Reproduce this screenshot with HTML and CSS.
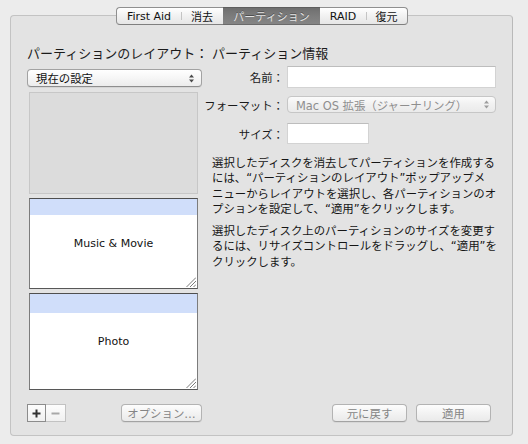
FILE: index.html
```html
<!DOCTYPE html>
<html lang="ja">
<head>
<meta charset="utf-8">
<title>ディスクユーティリティ</title>
<link rel="stylesheet" href="styles.css">
</head>
<body>
<div class="window">
  <div class="tabs">
    <div class="tab tab-firstaid">First Aid</div>
    <div class="tab tab-erase sep">消去</div>
    <div class="tab tab-partition selected">パーティション</div>
    <div class="tab tab-raid">RAID</div>
    <div class="tab tab-restore sep">復元</div>
  </div>
  <div class="panel">
    <div class="layout">
      <div class="col-left">
        <div class="heading">パーティションのレイアウト：</div>
        <div class="popup popup-layout">
          <span class="popup-text">現在の設定</span>
          <svg class="arrows" width="5" height="9" viewBox="0 0 5 9"><polygon points="0,3.6 2.5,0.4 5,3.6"/><polygon points="0,5.4 2.5,8.6 5,5.4"/></svg>
        </div>
        <div class="free-box"></div>
        <div class="part part-music">
          <div class="band"></div>
          <div class="part-name">Music &amp; Movie</div>
          <svg class="grip" width="10" height="10" viewBox="0 0 10 10"><path d="M0.5 10 L10 0.5 M4 10 L10 4 M7.5 10 L10 7.5"/></svg>
        </div>
        <div class="part part-photo">
          <div class="band"></div>
          <div class="part-name">Photo</div>
          <svg class="grip" width="10" height="10" viewBox="0 0 10 10"><path d="M0.5 10 L10 0.5 M4 10 L10 4 M7.5 10 L10 7.5"/></svg>
        </div>
      </div>
      <div class="col-right">
        <div class="heading">パーティション情報</div>
        <div class="field-row row-name">
          <label class="label"><span>名前：</span></label>
          <div class="input input-name"></div>
        </div>
        <div class="field-row row-format">
          <label class="label"><span>フォーマット：</span></label>
          <div class="popup popup-format">
            <span class="popup-text">Mac OS 拡張（ジャーナリング）</span>
            <svg class="arrows" width="5" height="9" viewBox="0 0 5 9"><polygon points="0,3.6 2.5,0.4 5,3.6"/><polygon points="0,5.4 2.5,8.6 5,5.4"/></svg>
          </div>
        </div>
        <div class="field-row row-size">
          <label class="label"><span>サイズ：</span></label>
          <div class="input input-size"></div>
        </div>
        <p class="desc">選択したディスクを消去してパーティションを作成する<br>には、“パーティションのレイアウト”ポップアップメ<br>ニューからレイアウトを選択し、各パーティションのオ<br>プションを設定して、“適用”をクリックします。</p>
        <p class="desc desc-second">選択したディスク上のパーティションのサイズを変更す<br>るには、リサイズコントロールをドラッグし、“適用”を<br>クリックします。</p>
      </div>
    </div>
    <div class="bottom">
      <div class="bottom-left">
        <div class="plusminus">
          <div class="pm pm-plus"><svg width="9" height="9" viewBox="0 0 9 9"><path d="M4.5 0.5 V8.5 M0.5 4.5 H8.5"/></svg></div>
          <div class="pm pm-minus"><svg width="9" height="9" viewBox="0 0 9 9"><path d="M0.5 4.5 H8.5"/></svg></div>
        </div>
        <div class="button button-options">オプション…</div>
      </div>
      <div class="bottom-right">
        <div class="button button-revert">元に戻す</div>
        <div class="button button-apply">適用</div>
      </div>
    </div>
  </div>
</div>
</body>
</html>
```

FILE: styles.css
```css
html, body {
  margin: 0;
  padding: 0;
}

body {
  width: 528px;
  height: 444px;
  overflow: hidden;
  background: #ececec;
  font-family: "DejaVu Sans", "Noto Sans CJK JP", sans-serif;
  color: #151515;
}

.window {
  padding-top: 7px;
}

/* ---------- segmented tab control ---------- */
.tabs {
  position: relative;
  z-index: 1;
  display: flex;
  padding-left: 116px;
  height: 18px;
}

.tab {
  box-sizing: border-box;
  height: 18px;
  display: flex;
  align-items: center;
  justify-content: center;
  font-size: 11px;
  color: #111111;
  border-top: 1px solid #8f8f8f;
  border-bottom: 1px solid #7f7f7f;
  background: linear-gradient(#ffffff, #f1f1f1 50%, #e6e6e6);
  position: relative;
}

.tab.sep::before {
  content: "";
  position: absolute;
  left: 0;
  top: 4px;
  bottom: 4px;
  width: 1px;
  background: #c4c4c4;
}

.tab-firstaid {
  width: 65px;
  border-left: 1px solid #8f8f8f;
  border-radius: 4px 0 0 4px;
}

.tab-erase {
  width: 42px;
}

.tab-partition {
  width: 97px;
}

.tab-raid {
  width: 46px;
}

.tab-restore {
  width: 42px;
  border-right: 1px solid #8f8f8f;
  border-radius: 0 4px 4px 0;
}

.tab.selected {
  background: linear-gradient(#6f6f6f, #7c7c7c 50%, #858585);
  border-top-color: #5e5e5e;
  border-bottom-color: #6a6a6a;
  color: #e4e4e4;
  text-shadow: 0 -1px 0 rgba(0, 0, 0, 0.35);
}

/* ---------- main panel ---------- */
.panel {
  box-sizing: border-box;
  margin: -10px 15px 0 10px;
  height: 421px;
  border: 1px solid #c3c3c3;
  border-right-color: #b9b9b9;
  border-radius: 4px;
  background: #e3e3e3;
  padding: 30px 16px 0 16px;
}

.layout {
  display: grid;
  grid-template-columns: 175px 284px;
  column-gap: 10px;
  align-items: start;
}

.heading {
  height: 16px;
  line-height: 16px;
  font-size: 13px;
  white-space: nowrap;
  color: #1b1b1b;
}

/* ---------- popups ---------- */
.popup {
  box-sizing: border-box;
  display: flex;
  align-items: center;
  justify-content: space-between;
  border-radius: 4px;
  font-size: 11.4px;
  white-space: nowrap;
}

.popup-layout {
  margin-top: 7px;
  height: 18px;
  width: 175px;
  padding: 0 7px 0 8px;
  border: 1px solid #a2a2a2;
  border-bottom-color: #8e8e8e;
  background: linear-gradient(#ffffff, #f6f6f6 50%, #ececec);
  box-shadow: 0 1px 0 rgba(0, 0, 0, 0.06);
  color: #111;
}

.popup-layout .arrows {
  fill: #4a4a4a;
}

.popup-format {
  height: 17px;
  width: 209px;
  padding: 0 6px 0 8px;
  border: 1px solid #c6c6c6;
  background: linear-gradient(#fbfbfb, #f1f1f1 50%, #eaeaea);
  color: #8e8e8e;
}

.popup-format .arrows {
  fill: #9d9d9d;
}

/* ---------- left column boxes ---------- */
.free-box {
  box-sizing: border-box;
  margin: 5px 4px 0 2px;
  height: 102px;
  background: #dcdcdc;
  border: 1px solid #c7c7c7;
}

.part {
  box-sizing: border-box;
  margin: 4px 4px 0 2px;
  display: grid;
  grid-template-columns: 1fr;
  grid-template-rows: 1fr;
  background: #ffffff;
  border-top: 1px solid #4f4f4f;
  border-bottom: 1px solid #575757;
  border-left: 1px solid #7c7c7c;
  border-right: 1px solid #7c7c7c;
}

.part-music {
  height: 91px;
}

.part-photo {
  height: 97px;
}

.band,
.part-name,
.grip {
  grid-area: 1 / 1;
}

.band {
  align-self: start;
  background: #d0defa;
}

.part-music .band {
  height: 16px;
}

.part-photo .band {
  height: 19px;
}

.part-name {
  align-self: center;
  justify-self: center;
  font-size: 11px;
  color: #111;
}

.grip {
  align-self: end;
  justify-self: end;
  margin: 0 1px 1px 0;
  stroke: #7a7a7a;
  stroke-width: 1;
  fill: none;
}

/* ---------- right column form ---------- */
.field-row {
  display: flex;
  align-items: center;
}

.label {
  flex: none;
  width: 72px;
  margin-right: 3px;
  display: flex;
  justify-content: flex-end;
  font-size: 11.4px;
  white-space: nowrap;
  color: #1a1a1a;
}

.row-name {
  margin-top: 4px;
}

.row-format {
  margin-top: 8px;
}

.row-size {
  margin-top: 10px;
}

.input {
  box-sizing: border-box;
  background: #ffffff;
  border: 1px solid #d3d3d3;
  border-top-color: #bdbdbd;
}

.input-name {
  width: 209px;
  height: 22px;
}

.input-size {
  width: 82px;
  height: 21px;
}

.desc {
  margin: 12px 0 0 0;
  font-size: 11.4px;
  line-height: 15.3px;
  white-space: nowrap;
  color: #151515;
}

.desc-second {
  margin-top: 7px;
}

/* ---------- bottom buttons ---------- */
.bottom {
  margin-top: 14px;
  display: grid;
  grid-template-columns: 175px 284px;
  column-gap: 10px;
}

.bottom-left {
  display: flex;
  justify-content: space-between;
  align-items: center;
}

.bottom-right {
  display: flex;
  justify-content: flex-end;
  align-items: center;
  gap: 9px;
  padding-right: 5px;
}

.plusminus {
  display: flex;
  height: 18px;
}

.pm {
  box-sizing: border-box;
  width: 19px;
  height: 18px;
  display: flex;
  align-items: center;
  justify-content: center;
  background: linear-gradient(#fdfdfd, #f0f0f0);
}

.pm svg {
  fill: none;
  stroke-width: 2;
}

.pm-plus {
  border: 1px solid #8c8c8c;
}

.pm-plus svg {
  stroke: #333333;
}

.pm-minus {
  width: 20px;
  border: 1px solid #c2c2c2;
  border-left: none;
}

.pm-minus svg {
  stroke: #a8a8a8;
}

.button {
  box-sizing: border-box;
  height: 18px;
  display: flex;
  align-items: center;
  justify-content: center;
  border: 1px solid #b3b3b3;
  border-bottom-color: #a3a3a3;
  border-radius: 4px;
  background: linear-gradient(#fdfdfd, #f3f3f3 50%, #eaeaea);
  box-shadow: 0 1px 0 rgba(0, 0, 0, 0.05);
  font-size: 11.4px;
  color: #858585;
  white-space: nowrap;
}

.button-options {
  width: 81px;
}

.button-revert,
.button-apply {
  width: 75px;
}
```
